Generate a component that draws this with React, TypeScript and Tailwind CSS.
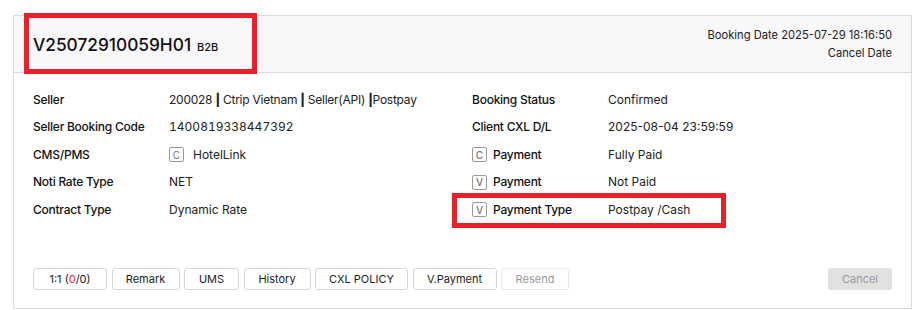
import React from 'react'

type Row = {
  badge?: 'C' | 'V'
  label: string
  value: React.ReactNode
}

const LEFT_ROWS: Row[] = [
  {
    label: 'Seller',
    value: (
      <span className="tracking-[-0.25px]">
        200028 <b className="font-extrabold">|</b> Ctrip Vietnam <b className="font-extrabold">|</b> Seller(API){' '}
        <b className="font-extrabold">|</b>Postpay
      </span>
    ),
  },
  { label: 'Seller Booking Code', value: <span className="tabular-nums">1400819338447392</span> },
  {
    label: 'CMS/PMS',
    value: (
      <span className="flex items-center gap-[9px]">
        <Badge letter="C" />
        HotelLink
      </span>
    ),
  },
  { label: 'Noti Rate Type', value: 'NET' },
  { label: 'Contract Type', value: 'Dynamic Rate' },
]

const RIGHT_ROWS: Row[] = [
  { label: 'Booking Status', value: 'Confirmed' },
  { label: 'Client CXL D/L', value: '2025-08-04 23:59:59' },
  { badge: 'C', label: 'Payment', value: 'Fully Paid' },
  { badge: 'V', label: 'Payment', value: 'Not Paid' },
  { badge: 'V', label: 'Payment Type', value: 'Postpay /Cash' },
]

function Badge({ letter }: { letter: string }) {
  return (
    <span className="inline-flex h-[15px] w-[15px] items-center justify-center rounded-[2px] border border-[#9a9a9a] text-[10px] leading-none tracking-normal text-[#777]">
      {letter}
    </span>
  )
}

function InfoRow({ row }: { row: Row }) {
  return (
    <div className="flex h-[27.5px] items-center">
      <div className="flex w-[136px] items-center gap-[6px] font-medium tracking-[-0.25px] text-[#111]">
        {row.badge && <Badge letter={row.badge} />}
        {row.label}
      </div>
      <div className="text-[#222]">{row.value}</div>
    </div>
  )
}

const BUTTONS = [
  { label: 'Remark', w: 'w-[68px]' },
  { label: 'UMS', w: 'w-[55px]' },
  { label: 'History', w: 'w-[67px]' },
  { label: 'CXL POLICY', w: 'w-[93px]' },
  { label: 'V.Payment', w: 'w-[84px]' },
]

export default function App() {
  return (
    <div className="relative min-h-[310px] bg-white pl-[13px] pt-[15px] text-[12px] font-['Inter',sans-serif]">
      <div className="flex h-[294px] w-[899px] flex-col border border-[#dcdcdc]">
        {/* Header */}
        <div className="flex h-[57px] items-center justify-between border-b border-[#dcdcdc] bg-[#f8f7fa] pl-[19px] pr-[19px]">
          <div className="flex items-baseline gap-[6px] pt-[1px]">
            <span className="text-[17.3px] font-medium text-[#111]">V25072910059H01</span>
            <span className="text-[11px] font-medium text-[#111]">B2B</span>
          </div>
          <div className="flex flex-col items-end gap-[1px] text-[11.2px] text-[#222]">
            <span className="leading-[17px]">Booking Date 2025-07-29 18:16:50</span>
            <span className="leading-[17px]">Cancel Date</span>
          </div>
        </div>

        {/* Body */}
        <div className="grid grid-cols-[439px_1fr] px-[19px] pt-[13px]">
          <div>
            {LEFT_ROWS.map((r, i) => (
              <InfoRow key={i} row={r} />
            ))}
          </div>
          <div>
            {RIGHT_ROWS.map((r, i) => (
              <InfoRow key={i} row={r} />
            ))}
          </div>
        </div>

        {/* Actions */}
        <div className="mt-auto flex items-center justify-between px-[19px] pb-[18px] text-[11px]">
          <div className="flex gap-[4.5px]">
            <button className="h-[22px] w-[74px] rounded-[3px] border border-[#d8d8d8] bg-white text-[#222]">
              1:1 (<span className="text-[#f0283c]">0</span>/0)
            </button>
            {BUTTONS.map(b => (
              <button key={b.label} className={`h-[22px] rounded-[3px] border border-[#d8d8d8] bg-white text-[#222] ${b.w}`}>
                {b.label}
              </button>
            ))}
            <button disabled className="h-[22px] w-[68px] rounded-[3px] border border-[#e8e8e8] bg-white text-[#9a9a9a]">
              Resend
            </button>
          </div>
          <button disabled className="h-[22px] w-[64px] rounded-[3px] bg-[#e1e1e1] text-[#9a9a9a]">
            Cancel
          </button>
        </div>
      </div>

      {/* Highlight boxes */}
      <div className="pointer-events-none absolute left-[24px] top-[13px] h-[61px] w-[233px] border-[5px] border-[#e8202a]" />
      <div className="pointer-events-none absolute left-[452px] top-[193px] h-[35px] w-[274px] border-[5px] border-[#e8202a]" />
    </div>
  )
}
